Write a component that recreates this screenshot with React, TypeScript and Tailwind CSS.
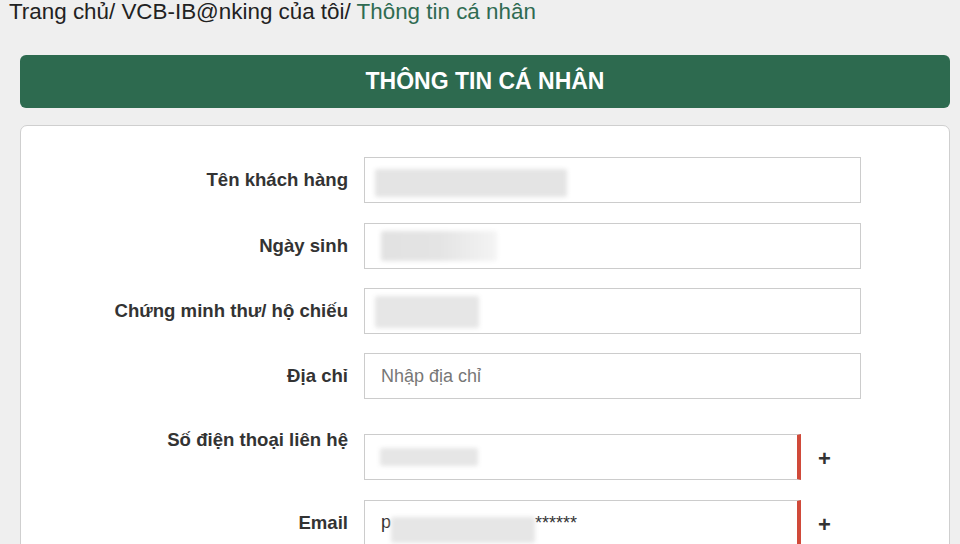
import React from "react";

const font = "font-['Liberation_Sans',Arial,sans-serif]";

function Blur({ className }: { className: string }) {
  return <div className={`absolute rounded-[2px] blur-[2px] ${className}`} />;
}

function Field({
  label,
  children,
  className = "",
  labelClass = "pt-[12px]",
}: {
  label: string;
  children: React.ReactNode;
  className?: string;
  labelClass?: string;
}) {
  return (
    <div className={`flex items-start ${className}`}>
      <div className={`w-[327px] shrink-0 text-right text-[18.6px] font-bold leading-[22px] text-[#333] ${labelClass}`}>
        {label}
      </div>
      <div className="ml-[16px] flex items-center">{children}</div>
    </div>
  );
}

export default function App() {
  return (
    <div className={`h-[544px] w-[960px] overflow-hidden bg-[#efefef] ${font}`}>
      {/* breadcrumb */}
      <div className="pl-[9px] text-[22.4px] leading-[24px] text-[#222]">
        Trang chủ/ VCB-IB@nking của tôi/{" "}
        <span className="text-[#2f6b52]">Thông tin cá nhân</span>
      </div>

      <div className="mt-[31px] ml-[20px] w-[930px]">
        <div className="flex h-[53px] items-center justify-center rounded-[6px] bg-[#2d6a4f] text-[23px] font-bold text-white">
          THÔNG TIN CÁ NHÂN
        </div>

        <div className="mt-[17px] h-[460px] rounded-[7px] border border-[#cfcfcf] bg-white pt-[31px]">
          <Field label="Tên khách hàng">
            <div className="relative h-[46px] w-[497px] border border-[#cccccc] bg-white">
              <Blur className="left-[10px] top-[11px] h-[28px] w-[192px] bg-[#e4e4e4]" />
            </div>
          </Field>

          <Field label="Ngày sinh" className="mt-[20px]">
            <div className="relative h-[46px] w-[497px] border border-[#cccccc] bg-white">
              <Blur className="left-[16px] top-[7px] h-[30px] w-[116px] bg-gradient-to-r from-[#e2e2e2] via-[#e4e4e4] to-[#f4f4f4]" />
            </div>
          </Field>

          <Field label="Chứng minh thư/ hộ chiếu" className="mt-[19px]">
            <div className="relative h-[46px] w-[497px] border border-[#cccccc] bg-white">
              <Blur className="left-[10px] top-[7px] h-[32px] w-[104px] bg-[#e6e6e6]" />
            </div>
          </Field>

          <Field label="Địa chỉ" className="mt-[19px]">
            <div className="flex h-[46px] w-[497px] items-center border border-[#cccccc] bg-white pl-[16px] text-[18px] text-[#777]">
              Nhập địa chỉ
            </div>
          </Field>

          <Field label="Số điện thoại liên hệ" className="mt-[35px]" labelClass="-mt-[5px]">
            <div className="relative h-[46px] w-[437px] border border-r-4 border-[#cccccc] border-r-[#d04a3a] bg-white">
              <Blur className="left-[15px] top-[13px] h-[18px] w-[98px] bg-[#e6e6e6]" />
            </div>
            <span className="ml-[17px] mt-[4px] text-[22px] font-bold leading-none text-[#333]">+</span>
          </Field>

          <Field label="Email" className="mt-[20px]">
            <div className="relative h-[46px] w-[437px] border border-r-4 border-[#cccccc] border-r-[#d04a3a] bg-white">
              <span className="absolute left-[16px] top-[10px] text-[18px] leading-[22px] text-[#333]">p</span>
              <span className="absolute left-[170px] top-[13px] text-[18px] leading-[18px] text-[#333]">******</span>
              <Blur className="left-[26px] top-[16px] h-[26px] w-[144px] bg-[#e6e6e6]" />
            </div>
            <span className="ml-[17px] mt-[4px] text-[22px] font-bold leading-none text-[#333]">+</span>
          </Field>
        </div>
      </div>
    </div>
  );
}
